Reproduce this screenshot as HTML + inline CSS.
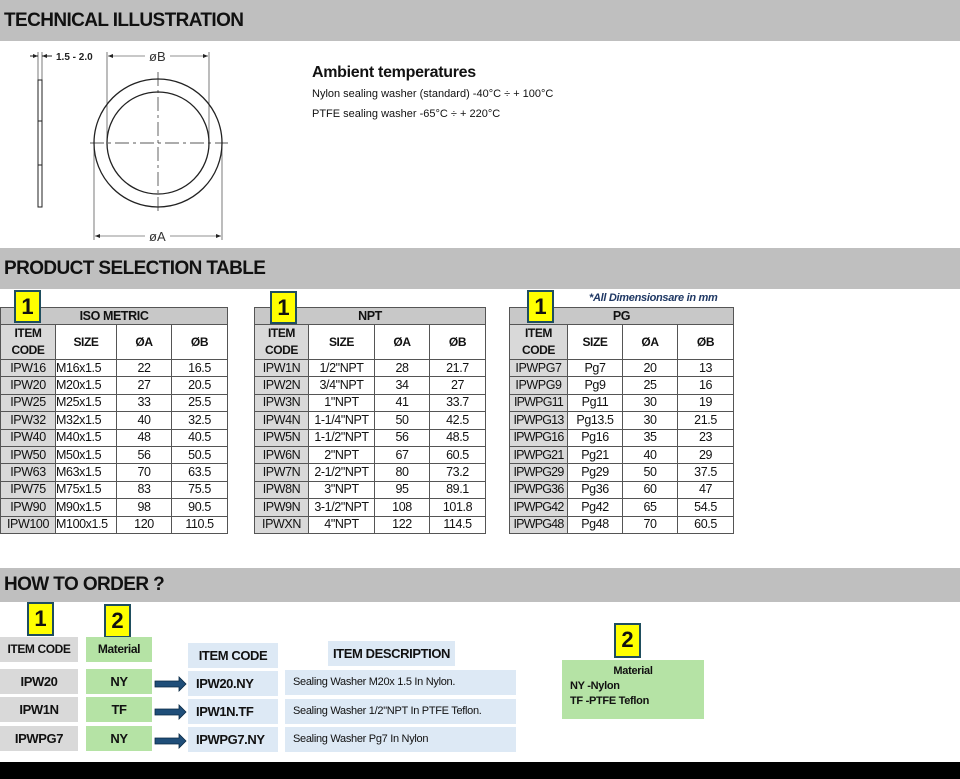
<!DOCTYPE html>
<html><head><meta charset="utf-8"><style>
*{margin:0;padding:0;box-sizing:border-box}
body{width:960px;height:779px;position:relative;background:#fff;font-family:"Liberation Sans",sans-serif;color:#111;overflow:hidden}
.bar{position:absolute;left:0;width:960px;background:#bfbfbf;font-weight:bold;font-size:19px;padding-left:4px;color:#111;letter-spacing:-0.6px}
.a{position:absolute}
.badge{position:absolute;width:27px;height:33px;background:#ffff00;border:2px solid #1f4e5f;font-weight:bold;font-size:22px;text-align:center;line-height:30px}
table{position:absolute;border-collapse:collapse;font-size:12.5px;table-layout:fixed;letter-spacing:-0.4px}
td{border:1px solid #555;text-align:center;height:17.4px;padding:0;line-height:15px;white-space:nowrap;overflow:hidden}
td.c{background:#d9d9d9}
tr.t td{background:#c8c8c8;font-weight:bold;height:17px}
tr.h td{font-weight:bold;height:35px;font-size:12px;line-height:17px}
.box{position:absolute;font-weight:bold;font-size:13px;text-align:center;letter-spacing:-0.4px}
.g{background:#d9d9d9}.gr{background:#b5e3a5}.bl{background:#dde9f5}
.desc{position:absolute;background:#dde9f5;font-size:11px;padding-left:8px;letter-spacing:-0.3px}
</style></head><body>
<div class="bar" style="top:0;height:41px;line-height:41px">TECHNICAL ILLUSTRATION</div>
<svg class="a" style="left:0;top:41px" width="260" height="207" viewBox="0 41 260 207">
<g stroke="#222" fill="none" stroke-width="1">
<rect x="38" y="80" width="4" height="127"/>
<line x1="38" y1="121" x2="42" y2="121"/><line x1="38" y1="165" x2="42" y2="165"/>
<line x1="38" y1="52" x2="38" y2="80" stroke-width=".6"/><line x1="42" y1="52" x2="42" y2="80" stroke-width=".6"/>
<line x1="30" y1="56" x2="38" y2="56"/><line x1="42" y1="56" x2="52" y2="56"/>
<circle cx="158" cy="143" r="64" stroke-width="1.3"/>
<circle cx="158" cy="143" r="51" stroke-width="1.3"/>
<line x1="90" y1="143" x2="228" y2="143" stroke-dasharray="14 4 3 4" stroke-width=".7"/>
<line x1="158" y1="72" x2="158" y2="212" stroke-dasharray="14 4 3 4" stroke-width=".7"/>
<line x1="107" y1="52" x2="107" y2="143" stroke-width=".6"/><line x1="209" y1="52" x2="209" y2="143" stroke-width=".6"/>
<line x1="94" y1="143" x2="94" y2="240" stroke-width=".6"/><line x1="222" y1="143" x2="222" y2="240" stroke-width=".6"/>
<line x1="108" y1="56" x2="145" y2="56" stroke-width=".6"/><line x1="170" y1="56" x2="208" y2="56" stroke-width=".6"/>
<line x1="95" y1="236" x2="145" y2="236" stroke-width=".6"/><line x1="170" y1="236" x2="221" y2="236" stroke-width=".6"/>
</g>
<g fill="#222"><path d="M38 56l-5-2v4z"/><path d="M42 56l5-2v4z"/><path d="M108 56l5-2v4z"/><path d="M208 56l-5-2v4z"/><path d="M95 236l5-2v4z"/><path d="M221 236l-5-2v4z"/></g>
<text x="56" y="60" font-size="10" font-weight="bold" font-family="Liberation Sans" fill="#222">1.5 - 2.0</text>
<text x="149" y="61" font-size="13" font-family="Liberation Sans" fill="#333">øB</text>
<text x="149" y="241" font-size="13" font-family="Liberation Sans" fill="#333">øA</text>
</svg>
<div class="a" style="left:312px;top:64px;font-weight:bold;font-size:16px;letter-spacing:-0.3px">Ambient temperatures</div>
<div class="a" style="left:312px;top:88px;font-size:11px">Nylon sealing washer (standard) -40°C ÷ + 100°C</div>
<div class="a" style="left:312px;top:108px;font-size:11px">PTFE sealing washer -65°C ÷ + 220°C</div>

<div class="bar" style="top:248px;height:41px;line-height:41px">PRODUCT SELECTION TABLE</div>
<div class="a" style="left:589px;top:292px;font-size:11px;font-weight:bold;font-style:italic;color:#1f3864;letter-spacing:-0.3px">*All Dimensionsare in mm</div>

<table style="left:0;top:307px;width:227px"><col style="width:55px"><col style="width:61px"><col style="width:55px"><col style="width:56px">
<tr class="t"><td colspan="4">ISO METRIC</td></tr>
<tr class="h"><td class="c">ITEM<br>CODE</td><td>SIZE</td><td>ØA</td><td>ØB</td></tr>
<tr><td class="c">IPW16</td><td style="text-align:left">M16x1.5</td><td>22</td><td>16.5</td></tr>
<tr><td class="c">IPW20</td><td style="text-align:left">M20x1.5</td><td>27</td><td>20.5</td></tr>
<tr><td class="c">IPW25</td><td style="text-align:left">M25x1.5</td><td>33</td><td>25.5</td></tr>
<tr><td class="c">IPW32</td><td style="text-align:left">M32x1.5</td><td>40</td><td>32.5</td></tr>
<tr><td class="c">IPW40</td><td style="text-align:left">M40x1.5</td><td>48</td><td>40.5</td></tr>
<tr><td class="c">IPW50</td><td style="text-align:left">M50x1.5</td><td>56</td><td>50.5</td></tr>
<tr><td class="c">IPW63</td><td style="text-align:left">M63x1.5</td><td>70</td><td>63.5</td></tr>
<tr><td class="c">IPW75</td><td style="text-align:left">M75x1.5</td><td>83</td><td>75.5</td></tr>
<tr><td class="c">IPW90</td><td style="text-align:left">M90x1.5</td><td>98</td><td>90.5</td></tr>
<tr><td class="c">IPW100</td><td style="text-align:left">M100x1.5</td><td>120</td><td>110.5</td></tr>
</table>
<table style="left:254px;top:307px;width:231px"><col style="width:54px"><col style="width:66px"><col style="width:55px"><col style="width:56px">
<tr class="t"><td colspan="4">NPT</td></tr>
<tr class="h"><td class="c">ITEM<br>CODE</td><td>SIZE</td><td>ØA</td><td>ØB</td></tr>
<tr><td class="c">IPW1N</td><td>1/2"NPT</td><td>28</td><td>21.7</td></tr>
<tr><td class="c">IPW2N</td><td>3/4"NPT</td><td>34</td><td>27</td></tr>
<tr><td class="c">IPW3N</td><td>1"NPT</td><td>41</td><td>33.7</td></tr>
<tr><td class="c">IPW4N</td><td>1-1/4"NPT</td><td>50</td><td>42.5</td></tr>
<tr><td class="c">IPW5N</td><td>1-1/2"NPT</td><td>56</td><td>48.5</td></tr>
<tr><td class="c">IPW6N</td><td>2"NPT</td><td>67</td><td>60.5</td></tr>
<tr><td class="c">IPW7N</td><td>2-1/2"NPT</td><td>80</td><td>73.2</td></tr>
<tr><td class="c">IPW8N</td><td>3"NPT</td><td>95</td><td>89.1</td></tr>
<tr><td class="c">IPW9N</td><td>3-1/2"NPT</td><td>108</td><td>101.8</td></tr>
<tr><td class="c">IPWXN</td><td>4"NPT</td><td>122</td><td>114.5</td></tr>
</table>
<table style="left:509px;top:307px;width:224px"><col style="width:58px"><col style="width:55px"><col style="width:55px"><col style="width:56px">
<tr class="t"><td colspan="4">PG</td></tr>
<tr class="h"><td class="c">ITEM<br>CODE</td><td>SIZE</td><td>ØA</td><td>ØB</td></tr>
<tr><td class="c">IPWPG7</td><td>Pg7</td><td>20</td><td>13</td></tr>
<tr><td class="c">IPWPG9</td><td>Pg9</td><td>25</td><td>16</td></tr>
<tr><td class="c" style="letter-spacing:-0.8px">IPWPG11</td><td>Pg11</td><td>30</td><td>19</td></tr>
<tr><td class="c" style="letter-spacing:-0.8px">IPWPG13</td><td>Pg13.5</td><td>30</td><td>21.5</td></tr>
<tr><td class="c" style="letter-spacing:-0.8px">IPWPG16</td><td>Pg16</td><td>35</td><td>23</td></tr>
<tr><td class="c" style="letter-spacing:-0.8px">IPWPG21</td><td>Pg21</td><td>40</td><td>29</td></tr>
<tr><td class="c" style="letter-spacing:-0.8px">IPWPG29</td><td>Pg29</td><td>50</td><td>37.5</td></tr>
<tr><td class="c" style="letter-spacing:-0.8px">IPWPG36</td><td>Pg36</td><td>60</td><td>47</td></tr>
<tr><td class="c" style="letter-spacing:-0.8px">IPWPG42</td><td>Pg42</td><td>65</td><td>54.5</td></tr>
<tr><td class="c" style="letter-spacing:-0.8px">IPWPG48</td><td>Pg48</td><td>70</td><td>60.5</td></tr>
</table>
<div class="badge" style="left:14px;top:290px">1</div>
<div class="badge" style="left:270px;top:291px">1</div>
<div class="badge" style="left:527px;top:290px">1</div>

<div class="bar" style="top:568px;height:34px;line-height:34px">HOW TO ORDER ?</div>
<div class="badge" style="left:27px;top:602px;height:34px">1</div>
<div class="badge" style="left:104px;top:604px;height:34px">2</div>
<div class="box g" style="left:0;top:637px;width:78px;height:25px;line-height:25px;font-size:12px">ITEM CODE</div>
<div class="box gr" style="left:86px;top:637px;width:66px;height:25px;line-height:25px;font-size:12px">Material</div>
<div class="box g" style="left:0;top:669px;width:78px;height:25px;line-height:25px">IPW20</div>
<div class="box g" style="left:0;top:697px;width:78px;height:25px;line-height:25px">IPW1N</div>
<div class="box g" style="left:0;top:726px;width:78px;height:25px;line-height:25px">IPWPG7</div>
<div class="box gr" style="left:86px;top:669px;width:66px;height:25px;line-height:25px">NY</div>
<div class="box gr" style="left:86px;top:697px;width:66px;height:25px;line-height:25px">TF</div>
<div class="box gr" style="left:86px;top:726px;width:66px;height:25px;line-height:25px">NY</div>
<svg class="a" style="left:154px;top:672px" width="34" height="80">
<g fill="#1f4e79" stroke="#0a2a44" stroke-width=".8"><path d="M1 9h24v-4l7 7-7 7v-4H1z"/><path d="M1 37h24v-4l7 7-7 7v-4H1z"/><path d="M1 66h24v-4l7 7-7 7v-4H1z"/></g></svg>
<div class="box bl" style="left:188px;top:643px;width:90px;height:25px;line-height:25px">ITEM CODE</div>
<div class="box bl" style="left:188px;top:671px;width:90px;height:25px;line-height:25px;text-align:left;padding-left:8px">IPW20.NY</div>
<div class="box bl" style="left:188px;top:699px;width:90px;height:25px;line-height:25px;text-align:left;padding-left:8px">IPW1N.TF</div>
<div class="box bl" style="left:188px;top:727px;width:90px;height:25px;line-height:25px;text-align:left;padding-left:8px">IPWPG7.NY</div>
<div class="box bl" style="left:328px;top:641px;width:127px;height:25px;line-height:25px">ITEM DESCRIPTION</div>
<div class="desc" style="left:285px;top:670px;width:231px;height:25px;line-height:25px">Sealing Washer M20x 1.5 In Nylon.</div>
<div class="desc" style="left:285px;top:699px;width:231px;height:25px;line-height:25px">Sealing Washer 1/2"NPT In PTFE Teflon.</div>
<div class="desc" style="left:285px;top:727px;width:231px;height:25px;line-height:25px">Sealing Washer Pg7 In Nylon</div>
<div class="badge" style="left:614px;top:623px;height:35px">2</div>
<div class="a gr" style="left:562px;top:660px;width:142px;height:59px;font-size:11px;font-weight:bold;padding:4px 0 0 8px;line-height:15px;letter-spacing:-0.3px"><div style="text-align:center;padding-right:8px">Material</div>NY -Nylon<br>TF -PTFE Teflon</div>
<div class="a" style="left:0;top:762px;width:960px;height:17px;background:#000"></div>
</body></html>
